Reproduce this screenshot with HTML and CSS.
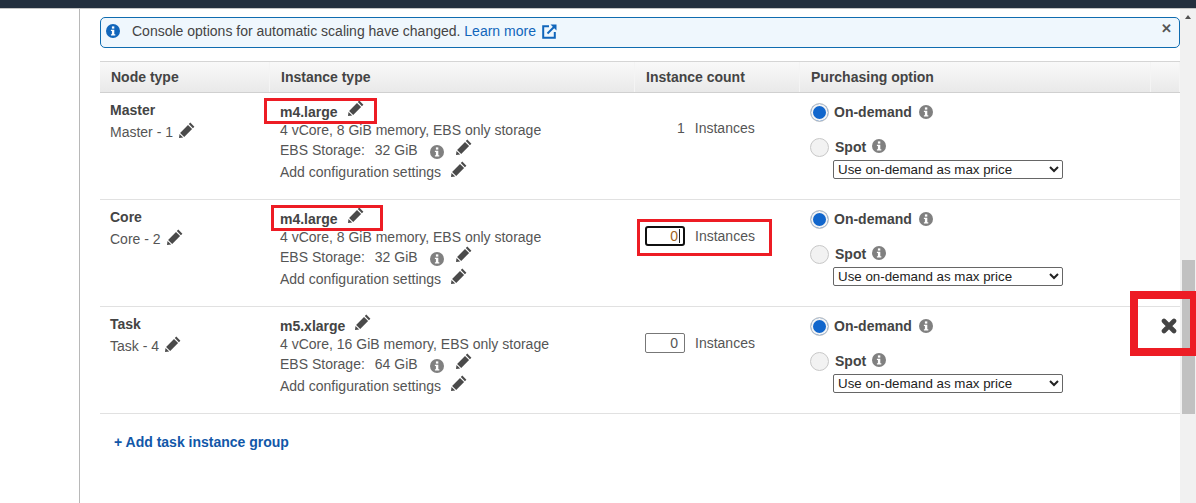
FILE: index.html
```html
<!DOCTYPE html>
<html lang="en">
<head>
  <meta charset="UTF-8">
  <title>Cluster nodes and instances</title>
  <link rel="stylesheet" href="styles.css">
</head>
<body>

<svg class="defs" width="0" height="0">
  <symbol id="pencil" viewBox="0 0 16 16">
    <path fill="#4a4a4a" d="M11.3 0.6 15.4 4.7 13.9 6.2 9.8 2.1ZM9 2.9 13.1 7 5.2 14.9 1.1 11ZM0.5 11.9 4.2 15.5 0 16Z"/>
  </symbol>
  <symbol id="info" viewBox="0 0 14 14">
    <circle cx="7" cy="7" r="7" fill="currentColor"/>
    <rect x="5.9" y="2.4" width="2.4" height="2.2" fill="#fff"/>
    <path fill="#fff" d="M4.9 5.7H8.3V10.2H9.3V11.6H4.9V10.2H5.9V7.1H4.9Z"/>
  </symbol>
</svg>

<div class="topbar"></div>

<div class="layout">
  <div class="sidebar"></div>

  <div class="main">
    <div class="notice">
      <svg class="notice-icon"><use href="#info"/></svg>
      <span class="notice-text">Console options for automatic scaling have changed. <a class="link" href="#">Learn more</a></span>
      <svg class="external" viewBox="0 0 15 15">
        <path fill="none" stroke="#1166bb" stroke-width="2" d="M7 2.2H1.2V13.8H12.8V8"/>
        <path fill="none" stroke="#1166bb" stroke-width="2" d="M5.5 9.5 13 2"/>
        <path fill="#1166bb" d="M8.5 0.5H14.5V6.5Z"/>
      </svg>
      <span class="notice-close">&#x2715;</span>
    </div>

    <div class="table">
      <div class="row head">
        <div class="th">Node type</div>
        <div class="th">Instance type</div>
        <div class="th">Instance count</div>
        <div class="th">Purchasing option</div>
        <div class="th"></div>
      </div>

      <div class="row">
        <div class="cell node">
          <div class="node-name">Master</div>
          <div class="node-id"><span>Master - 1</span><svg class="pencil"><use href="#pencil"/></svg></div>
        </div>
        <div class="cell type">
          <div class="line type-name"><span>m4.large</span><svg class="pencil"><use href="#pencil"/></svg></div>
          <div class="line type-spec">4 vCore, 8 GiB memory, EBS only storage</div>
          <div class="line type-ebs"><span>EBS Storage:</span><span class="ebs-size">32 GiB</span><svg class="info-small"><use href="#info"/></svg><svg class="pencil"><use href="#pencil"/></svg></div>
          <div class="line type-add"><span>Add configuration settings</span><svg class="pencil"><use href="#pencil"/></svg></div>
        </div>
        <div class="cell count count-fixed"><span>1</span><span>Instances</span></div>
        <div class="cell buy">
          <div class="option"><span class="radio on"></span><b>On-demand</b><svg class="info-small"><use href="#info"/></svg></div>
          <div class="option spot"><span class="radio"></span><b>Spot</b><svg class="info-small"><use href="#info"/></svg></div>
          <select class="price"><option>Use on-demand as max price</option></select>
        </div>
        <div class="cell"></div>
      </div>

      <div class="row">
        <div class="cell node">
          <div class="node-name">Core</div>
          <div class="node-id"><span>Core - 2</span><svg class="pencil"><use href="#pencil"/></svg></div>
        </div>
        <div class="cell type">
          <div class="line type-name"><span>m4.large</span><svg class="pencil"><use href="#pencil"/></svg></div>
          <div class="line type-spec">4 vCore, 8 GiB memory, EBS only storage</div>
          <div class="line type-ebs"><span>EBS Storage:</span><span class="ebs-size">32 GiB</span><svg class="info-small"><use href="#info"/></svg><svg class="pencil"><use href="#pencil"/></svg></div>
          <div class="line type-add"><span>Add configuration settings</span><svg class="pencil"><use href="#pencil"/></svg></div>
        </div>
        <div class="cell count"><span class="count-input focus">0</span><span>Instances</span></div>
        <div class="cell buy">
          <div class="option"><span class="radio on"></span><b>On-demand</b><svg class="info-small"><use href="#info"/></svg></div>
          <div class="option spot"><span class="radio"></span><b>Spot</b><svg class="info-small"><use href="#info"/></svg></div>
          <select class="price"><option>Use on-demand as max price</option></select>
        </div>
        <div class="cell"></div>
      </div>

      <div class="row">
        <div class="cell node">
          <div class="node-name">Task</div>
          <div class="node-id"><span>Task - 4</span><svg class="pencil"><use href="#pencil"/></svg></div>
        </div>
        <div class="cell type">
          <div class="line type-name"><span>m5.xlarge</span><svg class="pencil"><use href="#pencil"/></svg></div>
          <div class="line type-spec">4 vCore, 16 GiB memory, EBS only storage</div>
          <div class="line type-ebs"><span>EBS Storage:</span><span class="ebs-size">64 GiB</span><svg class="info-small"><use href="#info"/></svg><svg class="pencil"><use href="#pencil"/></svg></div>
          <div class="line type-add"><span>Add configuration settings</span><svg class="pencil"><use href="#pencil"/></svg></div>
        </div>
        <div class="cell count"><span class="count-input">0</span><span>Instances</span></div>
        <div class="cell buy">
          <div class="option"><span class="radio on"></span><b>On-demand</b><svg class="info-small"><use href="#info"/></svg></div>
          <div class="option spot"><span class="radio"></span><b>Spot</b><svg class="info-small"><use href="#info"/></svg></div>
          <select class="price"><option>Use on-demand as max price</option></select>
        </div>
        <div class="cell remove">
          <svg class="remove-icon" viewBox="0 0 16 16"><path fill="none" stroke="#444" stroke-width="4.6" stroke-linecap="round" d="M3 3 13 13M13 3 3 13"/></svg>
        </div>
      </div>
    </div>

    <a class="add-group" href="#">+ Add task instance group</a>
  </div>

  <div class="scrollbar">
    <div class="scroll-up"></div>
    <div class="scroll-thumb"></div>
  </div>
</div>

<!-- red boxes drawn over the screenshot -->
<div class="mark mark-type1"></div>
<div class="mark mark-type2"></div>
<div class="mark mark-count"></div>
<div class="mark mark-remove"></div>

</body>
</html>
```

FILE: styles.css
```css
html, body {
  margin: 0;
  height: 503px;
  overflow: hidden;
}
body {
  position: relative;
  font-family: "Liberation Sans", Arial, sans-serif;
  font-size: 14px;
  color: #555;
  background-color: #fff;
}
.defs {
  display: block;
  height: 0;
}
.topbar {
  height: 8px;
  background-color: #232f3e;
  border-bottom: 1px solid #c4c4c4;
}
.layout {
  display: flex;
  height: 494px;
}
.sidebar {
  width: 79px;
  border-right: 1px solid #b8b8b8;
}
.main {
  flex: 1;
  padding: 8px 0 0 20px;
  min-width: 0;
}
.scrollbar {
  width: 16px;
  background-color: #f1f1f1;
}
.scroll-up {
  width: 0;
  margin: 6px auto 0;
  border: 3.5px solid transparent;
  border-top: 0;
  border-bottom: 4px solid #505050;
}
.scroll-thumb {
  width: 13px;
  height: 154px;
  margin: 241px 0 0 2px;
  background-color: #c1c1c1;
}

/* notice */
.notice {
  display: flex;
  align-items: center;
  height: 26px;
  margin-bottom: 13px;
  padding-bottom: 3px;
  border: 1px solid #0f6cb0;
  border-radius: 5px;
  background-color: #eff7fd;
  color: #444;
}
.notice-icon {
  width: 14px;
  height: 14px;
  margin: 0 12px 0 5px;
  color: #1166bb;
}
.link {
  color: #1166bb;
  text-decoration: none;
}
.external {
  width: 15px;
  height: 15px;
  margin-left: 6px;
}
.notice-close {
  margin-left: auto;
  margin-right: 7px;
  margin-bottom: 6px;
  font-size: 13px;
  font-weight: bold;
  color: #555;
}

/* table */
.row {
  display: grid;
  grid-template-columns: 170px 365px 165px 351px 29px;
  height: 106px;
  border-bottom: 1px solid #e1e1e1;
}
.head {
  height: 30px;
  border-top: 1px solid #d5d5d5;
  border-bottom: 1px solid #d0d0d0;
  background: linear-gradient(#f9f9f9, #e9e9e9);
}
.th {
  padding: 7px 0 0 11px;
  border-right: 1px solid #f4f4f4;
  font-weight: bold;
  color: #444;
}
.cell {
  min-width: 0;
}
.node {
  padding: 9px 0 0 10px;
}
.node-name {
  font-weight: bold;
  color: #444;
}
.node-id {
  display: flex;
  align-items: center;
  height: 20px;
  margin-top: 4px;
}
.node-id .pencil {
  margin: 0 0 4px 6px;
}
.pencil {
  flex: none;
  width: 16px;
  height: 16px;
}
.type {
  padding: 10px 0 0 10px;
}
.line {
  display: flex;
  align-items: center;
  height: 18px;
}
.type-name {
  font-weight: bold;
  color: #444;
}
.type-name .pencil {
  margin: 0 0 8px 10px;
}
.type-ebs,
.type-add {
  height: 22px;
}
.ebs-size {
  margin-left: 10px;
}
.type-ebs .info-small {
  margin: 4px 12px 0 12px;
}
.type-ebs .pencil {
  margin-bottom: 6px;
}
.type-add .pencil {
  margin: 0 0 6px 10px;
}
.info-small {
  flex: none;
  width: 14px;
  height: 14px;
  color: #808080;
}
.count {
  display: flex;
  align-items: flex-start;
  gap: 10px;
  padding: 26px 0 0 10px;
  line-height: 20px;
}
.count-fixed {
  padding: 25px 0 0 42px;
}
.count-input {
  box-sizing: border-box;
  width: 40px;
  height: 20px;
  padding: 0 6px 0 0;
  line-height: 18px;
  text-align: right;
  border: 1px solid #777;
  border-radius: 2px;
}
.focus {
  padding-right: 3px;
  border: 2px solid #101010;
  border-radius: 3px;
  line-height: 16px;
  color: #a0641e;
}
.focus::after {
  content: "";
  display: inline-block;
  width: 1px;
  height: 14px;
  margin-left: 1px;
  vertical-align: -2px;
  background-color: #222;
}
.buy {
  padding: 8px 0 0 10px;
}
.option {
  display: flex;
  align-items: center;
  height: 22px;
  color: #444;
}
.option b {
  margin: 0 7px 0 5px;
}
.spot {
  margin-top: 13px;
}
.spot b {
  margin-left: 6px;
}
.spot .info-small {
  margin: 0 0 2px -1px;
}
.radio {
  box-sizing: border-box;
  width: 19px;
  height: 19px;
  border: 1px solid #c8c8c8;
  border-radius: 50%;
  background-color: #f2f2f2;
}
.radio.on {
  border: 1px solid #c8c8c8;
  background-color: #1166cc;
  box-shadow: inset 0 0 0 2px #f4f4f4;
}
.price {
  display: block;
  box-sizing: border-box;
  width: 230px;
  height: 19px;
  margin: 2px 0 0 23px;
  padding: 0;
  border: 1px solid #666;
  border-radius: 2px;
  background-color: #fff;
  font-family: "Liberation Sans", Arial, sans-serif;
  font-size: 13.33px;
  color: #222;
}
.remove {
  padding-top: 11px;
}
.remove-icon {
  display: block;
  width: 16px;
  height: 16px;
  margin-left: 10px;
}
.add-group {
  display: inline-block;
  margin: 20px 0 0 14px;
  font-weight: bold;
  color: #1157a8;
  text-decoration: none;
}

/* annotations */
.mark {
  position: absolute;
  box-sizing: border-box;
  border: 3px solid #ed1c24;
}
.mark-type1 {
  left: 264px;
  top: 98px;
  width: 113px;
  height: 26px;
}
.mark-type2 {
  left: 271px;
  top: 205px;
  width: 112px;
  height: 26px;
}
.mark-count {
  left: 637px;
  top: 219px;
  width: 135px;
  height: 37px;
}
.mark-remove {
  left: 1130px;
  top: 291px;
  width: 66px;
  height: 65px;
  border-width: 8px 6px 8px 8px;
}
```
